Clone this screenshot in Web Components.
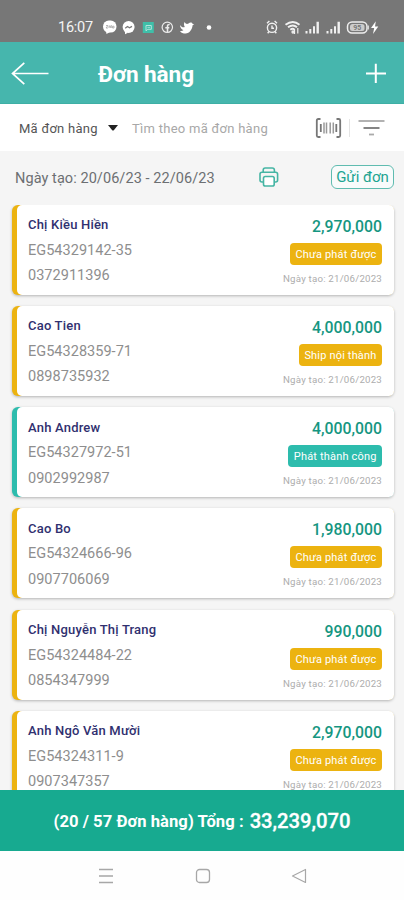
<!DOCTYPE html>
<html lang="vi">
<head>
<meta charset="utf-8">
<title>Đơn hàng</title>
<style>
html,body{margin:0;height:100%;overflow:hidden}
body{font-family:Roboto,"Noto Sans",sans-serif;background:#f5f5f5}
</style>
</head>
<body>
<orders-screen></orders-screen>
<script>
const define = (name, html, setup) => {
  const t = document.createElement('template');
  t.innerHTML = html;
  customElements.define(name, class extends HTMLElement {
    constructor() {
      super();
      this.attachShadow({ mode: 'open' }).appendChild(t.content.cloneNode(true));
    }
    connectedCallback() { if (setup) setup(this, this.shadowRoot); }
  });
};

define('status-bar', `
<style>
:host{display:flex;height:41.5px;flex:none;background:#777;color:#f4f4f4;box-sizing:border-box;padding:18px 24px 0 58px;justify-content:space-between;align-items:flex-start}
.left{display:flex;align-items:center;gap:9px}
.time{font-size:14.5px;line-height:19px;width:36px;white-space:nowrap;letter-spacing:-.25px}
svg{display:block;flex:none}
text{font:700 7px Roboto,sans-serif}
</style>
<div class="left"><span class="time">16:07</span>
<svg width="110" height="19" viewBox="0 0 110 19">
 <rect x="0" y="2.6" width="13.5" height="12" rx="5.8" fill="#fff"/><path d="M3 13l.5 3 3.5-2z" fill="#fff"/><path d="M3 7.5h2L3 10h2M6 10V8h1.300v2M8.300 7v3M9.500 8.200h1.500V10H9.500z" fill="none" stroke="#999" stroke-width=".7"/>
 <circle cx="25.600" cy="9" r="6" fill="#fff"/><path d="M22 13l0 3.200 3-1.400z" fill="#fff"/><path d="M22.200 10.300l2.300-1.800 2 1.300 2.500-1.400" fill="none" stroke="#777" stroke-width="1.300"/>
 <rect x="39.800" y="4" width="11" height="11" fill="#3fbfa9"/><path d="M43 12.800V7.500h5.300v3.800h-3.500z" fill="none" stroke="#b3e4dc" stroke-width="1"/><path d="M44.500 9.400h2.500" stroke="#b3e4dc" stroke-width=".8"/>
 <circle cx="64.300" cy="9.300" r="5.200" fill="none" stroke="#ececec" stroke-width="1.200"/><path d="M64.500 14V8.200q0-2 2.200-1.700M62.300 9.800h4" fill="none" stroke="#ececec" stroke-width="1.600"/>
 <path d="M77 7c1.500 2.300 3 2.700 4.800 2.100-1-1.500-1-3.500-.3-5 1.200 2 2.500 2.300 4 1.500 1.700-1.700 3.500-1 4.200.3l1.600.4-1.700 1c-.3 4-3 8.200-7 8.300-2.500 0-4.500-1-5.600-2.700 1.500.3 2.700 0 3.500-.8-2-.6-3.400-2.400-3.500-5.100z" fill="#fff"/>
 <circle cx="106" cy="9.500" r="2.300" fill="#fff"/>
</svg></div>
<svg width="114" height="19" viewBox="0 0 114 19">
 <g fill="none" stroke="#f0f0f0" stroke-width="1.400"><circle cx="6" cy="9.800" r="4.600"/><path d="M1 5.200L3.400 3M11 5.200L8.600 3M6 7.500v2.700h2M3 13.500l-1.300 1.700M9 13.500l1.300 1.700"/></g>
 <g fill="none" stroke="#f0f0f0" stroke-width="1.900"><path d="M19.500 6.800q7.500-5.600 14 0M22 9.300q5-3.800 9 0M24.300 11.700q2.500-1.800 4 0"/><path d="M28.500 11v5M31.800 10v5.500" stroke-width="1.200"/><circle cx="27" cy="14" r=".7"/></g>
 <g fill="#f0f0f0"><path d="M39.500 13h2v2.500h-2zM43.300 11h2v4.500h-2zM47 8.300h2v7.200h-2zM50.500 3.700h2.400v11.800h-2.400z"/><path d="M60.500 13h2v2.500h-2zM64.300 11h2v4.500h-2zM68 8.300h2v7.200h-2zM71.500 3.700h2.400v11.800h-2.400z"/></g>
 <rect x="81.500" y="4" width="19.500" height="11" rx="4.500" fill="none" stroke="#eee" stroke-width="1.500"/><rect x="84" y="6" width="14.500" height="7" rx="2.500" fill="#ccc"/><path d="M102.300 7.500v4" stroke="#eee"/>
 <text x="87.300" y="12.100" fill="#777">95</text>
 <path d="M109.800 3.200L105 10h3.200l-1.200 6 5.300-7.500H109z" fill="#fff"/>
</svg>`);

define('app-header', `
<style>
:host{display:flex;flex:none;height:62.500px;background:#46b6ad;color:#fff;align-items:center;box-sizing:border-box;padding:1px 18px 0 11px;border-bottom:1px solid #3eafa5}
h1{margin:0 auto 0 49px;font-size:22.600px;font-weight:700;line-height:28px;white-space:nowrap;padding-top:4px;letter-spacing:-.1px}
svg{display:block;flex:none}
</style>
<svg width="38" height="24" viewBox="0 0 38 24" fill="none" stroke="#fff" stroke-width="1.700"><path d="M37.500 12.500H1.500M13.300 1.800L1.500 12.500l11.800 10.700"/></svg>
<h1><slot></slot></h1>
<svg width="20" height="20" viewBox="0 0 20 20" stroke="#fff" stroke-width="2"><path d="M0 10.500h20M9.800.8v19.400"/></svg>`);

define('search-bar', `
<style>
:host{display:flex;flex:none;height:46.500px;background:#fff;align-items:center;box-sizing:border-box;padding:1px 19px 0 19px;font-size:13px;white-space:nowrap}
span{padding-top:2px}
.kind{width:89px;color:#555;letter-spacing:.25px}
.caret{width:10px;height:6px;flex:none;margin-right:14px}
.ph{flex:1;color:#a8a8a8;letter-spacing:.27px}
svg{display:block;flex:none}
i{width:1px;height:18px;background:#e4e4e4;margin:0 8px 0 7px}
</style>
<span class="kind">Mã đơn hàng</span>
<svg class="caret" viewBox="0 0 10 6"><path d="M0 0h10L5.800 5.200q-.8.700-1.600 0z" fill="#222"/></svg>
<span class="ph">Tìm theo mã đơn hàng</span>
<svg width="27" height="20" viewBox="0 0 27 20" fill="none" stroke="#777" stroke-width="1.800"><path d="M5.500 1H3.300Q1.800 1 1.800 2.500v15q0 1.500 1.500 1.500h2.200M21.500 1h2.200q1.500 0 1.500 1.500v15q0 1.500-1.500 1.500h-2.200"/><path d="M5.800 6v8M21.300 6v8"/><path d="M9 4.500v11M11.500 4.500v11M15.200 4.500v11M18.300 4.500v11" stroke="#999" stroke-width="1.500"/></svg>
<i></i>
<svg width="27" height="17" viewBox="0 0 27 17" fill="none" stroke-width="1.800"><path d="M.5 2h26" stroke="#aaa"/><path d="M5.500 9h16" stroke="#777"/><path d="M11 15.500h5" stroke="#aaa"/></svg>`);

define('range-row', `
<style>
:host{display:flex;flex:none;height:54px;align-items:center;box-sizing:border-box;padding:0 10px 1px 15px;color:#6c6f72;white-space:nowrap}
.date{font-size:14.500px;width:244px;letter-spacing:.07px;padding-top:3px}
svg{display:block;margin-right:52px;flex:none}
button{all:unset;box-sizing:border-box;width:63px;height:24px;border:1.500px solid #5fbcb0;border-radius:6px;color:#1ea592;font-size:15px;line-height:23px;text-align:center;background:#f8fbfb}
</style>
<span class="date"><slot></slot></span>
<svg width="20" height="20" viewBox="0 0 20 20" fill="none" stroke="#45b5a4" stroke-width="1.600" stroke-linejoin="round"><path d="M4.200 5.300V3.200Q4.200 1 6.200 1h7q2.200 0 2.200 2.200v2.100M4.500 15H3Q1 15 1 13V7.300q0-2 2-2h13.600q2 0 2 2V13q0 2-2 2h-1.500"/><rect x="4.500" y="9.500" width="10.700" height="9.500" rx="1.800" fill="#fff"/></svg>
<button>Gửi đơn</button>`);

define('order-card', `
<style>
:host{display:flex;box-sizing:border-box;height:90px;background:var(--c,#ecb310);border-radius:6px;box-shadow:0 1px 3px rgba(0,0,0,.27);padding-left:5px;white-space:nowrap}
:host([done]){--c:#2dbcad}
.body{flex:1;display:flex;justify-content:space-between;background:#fff;border-radius:5px;padding:0 11.500px}
.l,.r{display:flex;flex-direction:column}
.r{align-items:flex-end}
.name{font-weight:500;font-size:13px;line-height:18px;color:#30306f;margin-top:11.500px;letter-spacing:.2px}
.n{font-size:14.500px;line-height:20px;color:#8e8e8e;margin-top:6.500px;letter-spacing:.03px}
.n+.n{margin-top:5.500px}
.price{font-weight:500;font-size:15.800px;line-height:20px;color:#159681;margin-top:12px}
.tag{background:var(--c,#ecb310);color:#fff;border-radius:4px;height:22px;line-height:23px;padding:0 5.500px;font-size:11px;margin-top:6px;letter-spacing:.17px}
.d{font-size:9.700px;line-height:13px;color:#adadad;margin-top:7px;letter-spacing:.21px}
</style>
<div class="body"><div class="l"><span class="name"></span><span class="n code"></span><span class="n phone"></span></div>
<div class="r"><span class="price"></span><span class="tag"></span><span class="d">Ngày tạo: 21/06/2023</span></div></div>`,
(el, root) => { for (const k of ['name','code','phone','price','tag']) root.querySelector('.'+k).textContent = el.getAttribute(k); });

define('total-bar', `
<style>
:host{display:flex;flex:none;height:61px;background:#17aa90;color:#fff;font-weight:700;align-items:center;justify-content:center;gap:6px;white-space:nowrap;font-size:16.600px;padding-top:1px;box-sizing:border-box;letter-spacing:.05px}
b{font-size:20.300px;font-weight:500;-webkit-text-stroke:.3px #fff;letter-spacing:-.05px}
</style><span>(20 / 57 Đơn hàng) Tổng :</span><b>33,239,070</b>`);

define('nav-bar', `
<style>
:host{display:flex;flex:none;height:49px;background:#fefefe;align-items:center;justify-content:space-between;box-sizing:border-box;padding:0 97px 0 98px}
svg{display:block}
</style>
<svg width="16" height="16" viewBox="0 0 16 16" stroke="#a7a7a7" stroke-width="1.300"><path d="M1 1.500h14M1 8h14M1 14.500h14"/></svg>
<svg width="16" height="16" viewBox="0 0 16 16" fill="none" stroke="#a7a7a7" stroke-width="1.300"><rect x="1.500" y="1.500" width="13" height="13" rx="3"/></svg>
<svg width="16" height="16" viewBox="0 0 16 16" fill="none" stroke="#a7a7a7" stroke-width="1.200" stroke-linejoin="round"><path d="M14.500 1.500v13L1.500 8z"/></svg>`);

define('orders-screen', `
<style>
:host{display:flex;flex-direction:column;width:404px;height:900px;background:#f5f5f5;overflow:hidden}
.list{flex:1;min-height:0;overflow:hidden;display:flex;flex-direction:column;gap:11.250px;padding:0 10.500px 0 11.500px}
order-card{flex:none}
</style>
<status-bar></status-bar>
<app-header>Đơn hàng</app-header>
<search-bar></search-bar>
<range-row>Ngày tạo: 20/06/23 - 22/06/23</range-row>
<div class="list">
<order-card name="Chị Kiều Hiền" code="EG54329142-35" phone="0372911396" price="2,970,000" tag="Chưa phát được"></order-card>
<order-card name="Cao Tien" code="EG54328359-71" phone="0898735932" price="4,000,000" tag="Ship nội thành"></order-card>
<order-card done name="Anh Andrew" code="EG54327972-51" phone="0902992987" price="4,000,000" tag="Phát thành công"></order-card>
<order-card name="Cao Bo" code="EG54324666-96" phone="0907706069" price="1,980,000" tag="Chưa phát được"></order-card>
<order-card name="Chị Nguyễn Thị Trang" code="EG54324484-22" phone="0854347999" price="990,000" tag="Chưa phát được"></order-card>
<order-card name="Anh Ngô Văn Mười" code="EG54324311-9" phone="0907347357" price="2,970,000" tag="Chưa phát được"></order-card>
</div>
<total-bar></total-bar>
<nav-bar></nav-bar>`);
</script>
</body>
</html>
